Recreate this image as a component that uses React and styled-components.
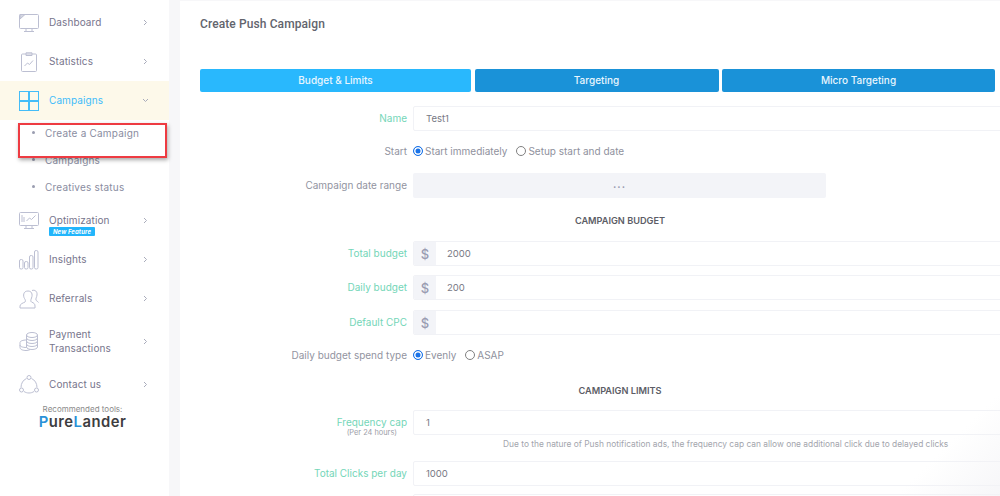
import React from "react";
import styled, { createGlobalStyle } from "styled-components";

const GlobalStyle = createGlobalStyle`
  html, body {
    margin: 0;
    padding: 0;
    background: #fff;
    overflow: hidden;
  }
  * {
    box-sizing: border-box;
  }
`;

const Page = styled.div`
  position: relative;
  display: flex;
  width: 1000px;
  height: 496px;
  overflow: hidden;
  background: #f7f7f9;
  font-family: Inter, "Noto Sans", sans-serif;
  color: #74788d;

  &::after {
    content: "";
    position: absolute;
    right: 0;
    bottom: 0;
    width: 130px;
    height: 100px;
    background: linear-gradient(135deg, rgba(243, 243, 246, 0) 55%, rgba(243, 243, 246, 0.75));
    pointer-events: none;
  }
`;

const Sidebar = styled.nav`
  position: relative;
  flex: 0 0 169px;
  height: 496px;
  padding-top: 3px;
  background: #fff;
`;

const NavRow = styled.div`
  display: flex;
  align-items: center;
  height: 39px;
  margin-top: ${(p) => p.$top || 0}px;
  padding: 0 20px 0 19px;
  background: ${(p) => (p.$active ? "#fdf9ea" : "transparent")};
  color: ${(p) => (p.$active ? "#3fbcfa" : "#77758c")};
`;

const NavIcon = styled.svg`
  flex: 0 0 20px;
  width: 20px;
  height: 20px;
  fill: none;
  stroke: ${(p) => (p.$active ? "#45bdf8" : "#bcbfd2")};
  stroke-width: 1;
`;

const NavText = styled.div`
  position: relative;
  flex: 1;
  margin: -2px 0 0 10px;
  font-size: 10px;
  line-height: 14px;
  letter-spacing: 0.1px;
`;

const Chevron = styled.svg`
  width: 7px;
  height: 7px;
  fill: none;
  stroke: #a9acbb;
  stroke-width: 1;
`;

const Badge = styled.div`
  position: absolute;
  top: 14px;
  left: 0;
  width: 46px;
  height: 9px;
  border-radius: 1px;
  background: #22b5fb;
  color: #fff;
  font-size: 6px;
  font-weight: 700;
  font-style: italic;
  line-height: 9px;
  text-align: center;
`;

const SubItem = styled.div`
  display: flex;
  align-items: center;
  height: 27px;
  padding: 0 0 2px 32px;
  color: #8a8da1;
  font-size: 10px;
  letter-spacing: 0.2px;

  &::before {
    content: "";
    width: 3px;
    height: 3px;
    margin-right: 10px;
    border-radius: 50%;
    background: #9a9db0;
  }
`;

const Promo = styled.div`
  padding-right: 4px;
  text-align: center;
`;

const PromoLabel = styled.div`
  color: #8a8a8a;
  font-size: 8px;
  line-height: 10px;
`;

const Logo = styled.div`
  color: #3d3d3f;
  font-size: 14.8px;
  font-weight: 600;
  line-height: 17px;
  letter-spacing: 0.5px;

  span {
    color: #2a92d8;
  }
`;

const Callout = styled.div`
  position: absolute;
  top: 123px;
  left: 18px;
  width: 149px;
  height: 35px;
  border: 2px solid #ee3b42;
  box-shadow: 1px 2px 4px rgba(0, 0, 0, 0.35);
`;

const Main = styled.main`
  flex: 0 0 820px;
  margin-left: 11px;
  margin-top: 1px;
  padding-left: 20px;
  background: #fff;
`;

const Title = styled.h1`
  margin: 0;
  padding-top: 15px;
  height: 68px;
  color: #62646d;
  font-family: Roboto, sans-serif;
  font-size: 12px;
  font-weight: 500;
  line-height: 16px;
  letter-spacing: 0.1px;
`;

const Tabs = styled.div`
  display: flex;
  gap: 3.5px;
  width: 795px;
  height: 23px;
`;

const Tab = styled.button`
  flex: ${(p) => p.$grow};
  padding: 0 0 2px;
  border: 0;
  border-radius: 2px;
  background: ${(p) => (p.$active ? "#29b8fd" : "#1a92d8")};
  color: #e9f6fe;
  font-family: inherit;
  font-size: 10px;
  font-weight: 500;
`;

const Row = styled.div`
  display: grid;
  grid-template-columns: 207px 620px;
  column-gap: 6px;
  align-items: center;
  height: ${(p) => p.$height || 25}px;
  margin-top: ${(p) => p.$top}px;
`;

const Label = styled.label`
  color: ${(p) => (p.$required ? "#74d6b8" : "#92949f")};
  font-size: 10px;
  line-height: 11px;
  text-align: right;
`;

const LabelHint = styled.div`
  margin: 0 10px -9px 0;
  color: #9c9ea8;
  font-size: 7.4px;
  line-height: 9px;
`;

const Field = styled.div`
  display: flex;
  align-items: center;
  height: 25px;
  border: 1px solid #f1f2f6;
  border-radius: 2px;
  background: #fff;
  overflow: hidden;
`;

const Addon = styled.div`
  flex: 0 0 22px;
  align-self: stretch;
  display: flex;
  align-items: center;
  justify-content: center;
  background: #f3f4f8;
  color: #9a9cb2;
  font-size: 13px;
  font-weight: 500;
`;

const Value = styled.div`
  padding-left: ${(p) => (p.$addon ? 11 : 12)}px;
  color: #777984;
  font-size: 9.5px;
`;

const RangeField = styled.div`
  width: 413px;
  height: 25px;
  border-radius: 2px;
  background: #f3f4f8;
  color: #9a9cb2;
  font-size: 10px;
  font-weight: 700;
  line-height: 23px;
  letter-spacing: 1px;
  text-align: center;
`;

const Options = styled.div`
  display: flex;
  align-items: center;
  gap: 9px;
`;

const Option = styled.div`
  display: flex;
  align-items: center;
  gap: 2px;
  color: #8f919d;
  font-size: 10px;
`;

const Radio = styled.span`
  width: 10px;
  height: 10px;
  border-radius: 50%;
  border: 1px solid ${(p) => (p.$checked ? "#1a73e8" : "#808080")};
  background: ${(p) => (p.$checked ? "#1a73e8" : "#fff")};
  box-shadow: ${(p) => (p.$checked ? "inset 0 0 0 1.5px #fff" : "none")};
`;

const SectionTitle = styled.div`
  width: 840px;
  margin-top: ${(p) => p.$top}px;
  color: #5c5d66;
  font-size: 9.2px;
  font-weight: 600;
  line-height: 12px;
  text-align: center;
`;

const Note = styled.div`
  margin: 4px 0 0 303px;
  color: #a3a5ad;
  font-size: 8.4px;
  line-height: 11px;
  white-space: nowrap;
`;

const icons = {
  dashboard: (
    <>
      <rect x="0.5" y="1.5" width="19" height="14" rx="1" />
      <path d="M1 6l5-4.500H1z" fill="#d5d7e2" />
      <path d="M7 16v2M13 16v2M5 18.500h10" />
    </>
  ),
  statistics: (
    <>
      <rect x="2.500" y="2" width="15" height="17.500" rx="1" />
      <path d="M7 2V.8h6V2M7 2v1.500h6V2M5.500 14l3-3 2 1.500 3.500-4" />
    </>
  ),
  campaigns: (
    <>
      <rect x="0.5" y="0.5" width="9" height="9" />
      <rect x="10.5" y="0.5" width="9" height="9" />
      <rect x="0.5" y="10.5" width="9" height="9" />
      <rect x="10.5" y="10.5" width="9" height="9" />
    </>
  ),
  optimization: (
    <>
      <rect x="0.5" y="1.5" width="19" height="13" rx="1" />
      <path d="M3 11V4M5 11V6M7.500 10l3-3 2 1.500 4-4M7 15v2M13 15v2M5 17.500h10" />
    </>
  ),
  insights: (
    <>
      <rect x="0.5" y="9.5" width="3.5" height="9.5" rx="1.5" />
      <rect x="5.5" y="11.5" width="3.5" height="7.5" rx="1.5" />
      <rect x="10.5" y="5.5" width="3.5" height="13.5" rx="1.5" />
      <rect x="15.5" y="0.5" width="3.5" height="18.5" rx="1.5" />
    </>
  ),
  referrals: (
    <>
      <path d="M1 19v-2c0-2 3-3 5-4 .8-.6.5-2-.5-3.500C4 7 4 2 9 2c3.500 0 5 3 3.500 7-.8 2-1 3.500 0 4 2.500 1 3.500 2 3.500 4v2z" />
      <path d="M13 1.500c3-1 5.500 1 5 4.500-.3 2.500-1.500 3.500-1 5 .3 1 1.500 1 2.500 2.500" />
    </>
  ),
  payment: (
    <>
      <ellipse cx="13" cy="3" rx="5.500" ry="2.500" />
      <path d="M7.500 3v12c0 1.400 2.500 2.500 5.500 2.500s5.500-1.100 5.500-2.500V3M7.500 6c0 1.400 2.500 2.500 5.500 2.500S18.500 7.400 18.500 6M7.500 9c0 1.400 2.500 2.500 5.500 2.500s5.500-1.100 5.500-2.500M7.500 12c0 1.400 2.500 2.500 5.500 2.500s5.500-1.100 5.500-2.500" />
      <path d="M7.500 8C4 8 1 9 1 10.500v5C1 17.500 4 18.500 7 18.500c1.500 0 3-.3 4-.9M1 13c0 1.500 2.500 2.500 6.500 2.500" />
    </>
  ),
  contact: (
    <>
      <circle cx="10" cy="2.500" r="2" />
      <circle cx="2.500" cy="15" r="2" />
      <circle cx="17.500" cy="15" r="2" />
      <path d="M7.500 3.500C4 5 2 8.500 2 12.500M12.500 3.500c3.500 1.500 5.500 5 5.500 9M5 16.500c3 2 7 2 10 0" />
    </>
  ),
};

const NavItem = ({ icon, active, open, top, children }) => (
  <NavRow $active={active} $top={top}>
    <NavIcon viewBox="0 0 20 20" $active={active}>
      {icons[icon]}
    </NavIcon>
    <NavText>{children}</NavText>
    <Chevron viewBox="0 0 7 7">
      <path d={open ? "M1 2l2.500 2.500L6 2" : "M2 1l2.500 2.500L2 6"} />
    </Chevron>
  </NavRow>
);

const MoneyField = ({ value }) => (
  <Field>
    <Addon>$</Addon>
    <Value $addon>{value}</Value>
  </Field>
);

const App = () => (
  <Page>
    <GlobalStyle />
    <Sidebar>
      <NavItem icon="dashboard">Dashboard</NavItem>
      <NavItem icon="statistics">Statistics</NavItem>
      <NavItem icon="campaigns" active open>
        Campaigns
      </NavItem>
      <SubItem>Create a Campaign</SubItem>
      <SubItem>Campaigns</SubItem>
      <SubItem>Creatives status</SubItem>
      <NavItem icon="optimization">
        Optimization
        <Badge>New Feature</Badge>
      </NavItem>
      <NavItem icon="insights">Insights</NavItem>
      <NavItem icon="referrals">Referrals</NavItem>
      <NavItem icon="payment" top={4}>
        Payment
        <br />
        Transactions
      </NavItem>
      <NavItem icon="contact" top={4}>
        Contact us
      </NavItem>
      <Promo>
        <PromoLabel>Recommended tools:</PromoLabel>
        <Logo>
          <span>P</span>ure<span>L</span>ander
        </Logo>
      </Promo>
      <Callout />
    </Sidebar>
    <Main>
      <Title>Create Push Campaign</Title>
      <Tabs>
        <Tab $active $grow={271}>
          Budget &amp; Limits
        </Tab>
        <Tab $grow={244}>Targeting</Tab>
        <Tab $grow={273}>Micro Targeting</Tab>
      </Tabs>
      <Row $top={14}>
        <Label $required>Name</Label>
        <Field>
          <Value>Test1</Value>
        </Field>
      </Row>
      <Row $top={11} $height={18}>
        <Label>Start</Label>
        <Options>
          <Option>
            <Radio $checked />
            Start immediately
          </Option>
          <Option>
            <Radio />
            Setup start and date
          </Option>
        </Options>
      </Row>
      <Row $top={13}>
        <Label>Campaign date range</Label>
        <RangeField>...</RangeField>
      </Row>
      <SectionTitle $top={17}>CAMPAIGN BUDGET</SectionTitle>
      <Row $top={14}>
        <Label $required>Total budget</Label>
        <MoneyField value="2000" />
      </Row>
      <Row $top={9}>
        <Label $required>Daily budget</Label>
        <MoneyField value="200" />
      </Row>
      <Row $top={10}>
        <Label $required>Default CPC</Label>
        <MoneyField />
      </Row>
      <Row $top={11} $height={18}>
        <Label>Daily budget spend type</Label>
        <Options>
          <Option>
            <Radio $checked />
            Evenly
          </Option>
          <Option>
            <Radio />
            ASAP
          </Option>
        </Options>
      </Row>
      <SectionTitle $top={21}>CAMPAIGN LIMITS</SectionTitle>
      <Row $top={13}>
        <Label $required>
          Frequency cap
          <LabelHint>(Per 24 hours)</LabelHint>
        </Label>
        <Field>
          <Value>1</Value>
        </Field>
      </Row>
      <Note>
        Due to the nature of Push notification ads, the frequency cap can allow one additional click due to delayed clicks
      </Note>
      <Row $top={11}>
        <Label $required>Total Clicks per day</Label>
        <Field>
          <Value>1000</Value>
        </Field>
      </Row>
      <Row $top={8}>
        <Label />
        <Field />
      </Row>
    </Main>
  </Page>
);

export default App;
